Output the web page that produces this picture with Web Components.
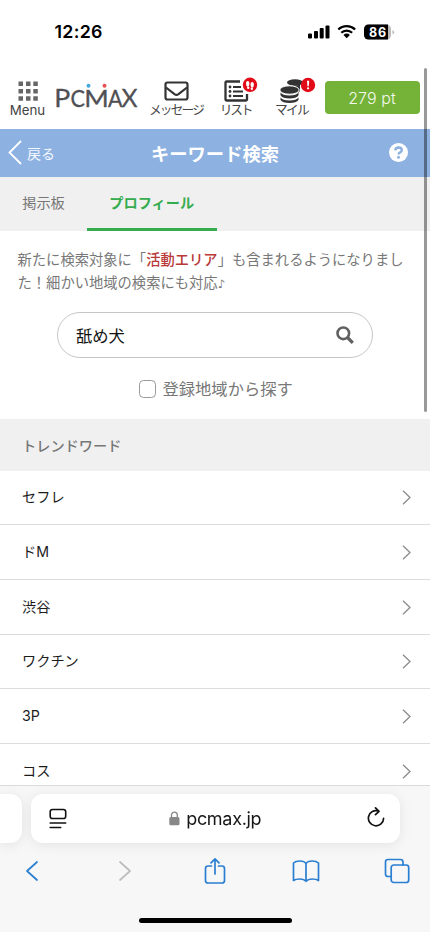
<!DOCTYPE html>
<html lang="ja">
<head>
<meta charset="utf-8">
<meta name="viewport" content="width=device-width">
<title>キーワード検索</title>
<style>
html,body{margin:0;padding:0}
body{width:430px;height:932px;overflow:hidden;background:#fff;font-family:Inter,"Noto Sans CJK JP",sans-serif}
</style>
</head>
<body>
<search-screen></search-screen>
<script>
function define(name, html) {
  const t = document.createElement('template');
  t.innerHTML = html;
  customElements.define(name, class extends HTMLElement {
    constructor() {
      super();
      this.attachShadow({mode: 'open'}).append(t.content.cloneNode(true));
    }
  });
}

define('status-bar', `
<style>
:host{display:flex;height:66px;box-sizing:border-box;padding:21px 37px 0 54.5px;align-items:flex-start;justify-content:space-between;color:#000}
.time{font-size:17.8px;line-height:21px;font-weight:600;letter-spacing:.3px}
.right{display:flex;align-items:center;height:21px;margin:-1px -6px 0 0}
svg{display:block}
</style>
<span class="time">12:26</span>
<div class="right">
<svg width="92" height="20" viewBox="0 0 92 20">
<rect x="1" y="12.500" width="4" height="5" rx="1"/><rect x="7" y="10" width="4" height="7.500" rx="1"/><rect x="12.700" y="7" width="4" height="10.500" rx="1"/><rect x="18.500" y="4.500" width="4" height="13" rx="1"/>
<g transform="translate(0 .7)"><g fill="none" stroke="#000" stroke-width="2.300"><path d="M31.300 7.800a12 12 0 0 1 16.800 0"/><path d="M34.300 11.100a7.700 7.700 0 0 1 10.800 0"/></g>
<path d="M36.500 13.200a4.500 4.500 0 0 1 6.400 0l-3.200 3.300z"/></g>
<rect x="57" y="3.500" width="27" height="15" rx="4.500" fill="#bbb"/><path d="M61.500 3.500H81v15H61.500a4.500 4.500 0 0 1-4.500-4.500V8a4.500 4.500 0 0 1 4.500-4.500z"/>
<path d="M85.500 9v4.500q1.700-.7 1.700-2.250T85.500 9z" fill="#bbb"/>
<text x="62" y="15.600" font-size="12.500" font-weight="700" textLength="17" fill="#fff">86</text>
</svg></div>`);

define('nav-item', `
<style>
:host{display:flex;flex-direction:column;align-items:center;color:#444;flex:none}
.i{height:25px;display:flex;align-items:center}
.l{font-size:var(--fs,13px);line-height:16px;white-space:nowrap;letter-spacing:var(--ls,0);margin-top:-1px}
</style>
<div class="i"><slot name="icon"></slot></div><div class="l"><slot></slot></div>`);

define('site-header', `
<style>
:host{display:grid;grid-template-columns:55px 87px 68px 51px 61px 97px;height:63px;box-sizing:border-box;padding-top:12px;align-items:start}
svg{display:block;overflow:visible}
.pt{height:33px;margin:3px 0 0 2.500px;width:95px;background:#74b238;border-radius:4px;color:#f4f9ee;display:flex;align-items:center;justify-content:center;font-size:16px;font-weight:350;letter-spacing:.1px}
</style>
<nav-item style="--fs:13.300px;--ls:0px"><svg slot="icon" width="20" height="20" viewBox="0 0 20 20" fill="#666"><path d="M.5.500h4.500v4.500H.5zM8 .5h4.500v4.500H8zM15.300.500h4.500v4.500h-4.500zM.5 8h4.500v4.500H.5zM8 8h4.500v4.500H8zM15.300 8h4.500v4.500h-4.500zM.5 15.200h4.500v4.500H.5zM8 15.200h4.500v4.500H8zM15.300 15.200h4.500v4.500h-4.500z"/></svg>Menu</nav-item>
<svg width="87" height="36" viewBox="0 0 87 36">
<g fill="#505054" stroke="#505054" stroke-width=".3" stroke-linejoin="round" font-family="Lato" font-weight="400">
<text x="-.8" y="29" font-size="25.500" textLength="16" lengthAdjust="spacingAndGlyphs">P</text>
<text x="15.500" y="29" font-size="22.500" textLength="14.500" lengthAdjust="spacingAndGlyphs">C</text>
<text x="29.200" y="29" font-size="24" textLength="24.500" lengthAdjust="spacingAndGlyphs">M</text>
<text x="53" y="29" font-size="22.500" textLength="14.500" lengthAdjust="spacingAndGlyphs">A</text>
<text x="66.500" y="29" font-size="24.500" textLength="16" lengthAdjust="spacingAndGlyphs">X</text></g>
<circle cx="33.500" cy="7.700" r="2" fill="#43a8df"/><circle cx="49.500" cy="7.700" r="2" fill="#e84f53"/></svg>
<nav-item style="--fs:12.700px;--ls:-1.800px"><svg slot="icon" width="25" height="20" viewBox="0 0 25 20" fill="none" stroke="#333" stroke-width="2.200" stroke-linejoin="round"><rect x="1.500" y="1.500" width="22" height="17" rx="2"/><path d="M2 6.500l8.500 6.700q2 1.500 4 0L23 6.500"/></svg>メッセージ</nav-item>
<nav-item style="--fs:12.700px;--ls:-2.200px"><svg slot="icon" width="24" height="22" viewBox="0 0 24 22"><g fill="none" stroke="#333" stroke-width="2.300"><path d="M16 1.500H2.500Q1.500 1.500 1.500 2.500v17q0 1 1 1H22q1 0 1-1V14"/><path d="M9 7h8M9 11.500h10M9 16h10" stroke-width="2"/></g><g fill="#333"><circle cx="6" cy="7" r="1.400"/><circle cx="6" cy="11.500" r="1.400"/><circle cx="6" cy="16" r="1.400"/></g><circle cx="26" cy="4.800" r="7.200" fill="#e20c18"/><g fill="#fff"><ellipse cx="23.700" cy="3.800" rx="1.700" ry="2.900"/><circle cx="24.200" cy="7.700" r="1.200"/><ellipse cx="28.200" cy="4.800" rx="1.700" ry="2.900"/><circle cx="27.800" cy="8.800" r="1.200"/></g></svg>リスト</nav-item>
<nav-item style="--fs:12.700px;--ls:-1.700px"><svg slot="icon" width="24" height="24" viewBox="0 0 24 24" fill="#333"><ellipse cx="15" cy="3.500" rx="8" ry="3.300"/><path d="M13 6.500q5 .5 7-1.500v7l-2 2V9z"/><ellipse cx="9.500" cy="11" rx="9.700" ry="4.200" stroke="#fff" stroke-width="1"/><path d="M.5 13.500q2 3 9 3t9-3v2.700q-2 3.300-9 3.300t-9-3.300zM.5 18.500q2 3 9 3t9-3V21q-2 3-9 3t-9-3z"/><circle cx="28" cy="6" r="7.200" fill="#e20c18"/><path d="M27 1.700h2.200l-.4 5.500h-1.400z" fill="#fff"/><circle cx="28.100" cy="9.300" r="1.100" fill="#fff"/></svg>マイル</nav-item>
<div class="pt">279 pt</div>`);

define('title-bar', `
<style>
:host{display:grid;grid-template-columns:1fr auto 1fr;align-items:center;height:47.500px;background:#8db1e1;color:#fff;box-sizing:border-box;padding:0 8px}
.b{display:flex;align-items:center;gap:5px;font-size:14px;color:#f4f8ff}
b{font-size:18.300px;font-weight:600}
.q{justify-self:end;margin-right:14.500px}
svg{display:block}
</style>
<div class="b"><svg width="14" height="25" viewBox="0 0 14 25"><path d="M13 1L1.500 12.500 13 24" fill="none" stroke="#fff" stroke-width="1.800"/></svg><span>戻る</span></div>
<b>キーワード検索</b>
<svg class="q" width="19" height="19" viewBox="0 0 19 19"><circle cx="9.500" cy="9.500" r="9.500" fill="#fff"/><path d="M6.200 7.300Q6.500 4.500 9.600 4.500q3.200.1 3.200 2.600 0 1.500-1.600 2.300-1.600.8-1.600 2" fill="none" stroke="#8db1e1" stroke-width="2.400"/><circle cx="9.500" cy="14.200" r="1.500" fill="#8db1e1"/></svg>`);

define('tab-bar', `
<style>
:host{display:flex;height:54.500px;background:#f0f0f0;font-size:14.200px;color:#777}
div{box-sizing:border-box;display:flex;align-items:center;justify-content:center;padding-bottom:3px}
.a{width:87px}.p{width:129.500px;color:#35ac4d;font-weight:600;border-bottom:3px solid #35ac4d;padding:0}
</style><div class="a">掲示板</div><div class="p">プロフィール</div>`);

define('search-form', `
<style>
:host{display:block;height:188px;box-sizing:border-box;padding:17px 0 0;color:#777}
p{margin:0 0 0 17.500px;font-size:14.300px;line-height:23px;white-space:nowrap}
em{font-style:normal;color:#b93838;font-weight:500}
.n{font-family:"DejaVu Sans";font-size:11.500px;line-height:1}
.box{margin:18px 0 0 57px;width:316px;height:46px;box-sizing:border-box;border:1px solid #c6c6c6;border-radius:23px;padding:0 18px;display:flex;align-items:center;justify-content:space-between;color:#111;font-size:16.300px}
.c{display:flex;align-items:center;gap:6.500px;margin:19px 0 0 138.500px;font-size:16.300px;line-height:24px}
i{width:17.500px;height:17.500px;box-sizing:border-box;border:1.700px solid #999;border-radius:4.500px}
</style>
<p>新たに検索対象に「<em>活動エリア</em>」も含まれるようになりまし<br>た！細かい地域の検索にも対応<span class="n">♪</span></p>
<div class="box"><span>舐め犬</span><svg width="18" height="18" viewBox="0 0 18 18" fill="none" stroke="#606060"><circle cx="7.300" cy="7.300" r="5.800" stroke-width="2.600"/><path d="M11.500 11.500l5.300 5.300" stroke-width="3.200"/></svg></div>
<div class="c"><i></i><span>登録地域から探す</span></div>`);

define('section-title', `
<style>:host{display:flex;align-items:center;height:51.500px;background:#f0f0f0;color:#777;font-weight:500;font-size:14.200px;padding-left:22px;box-sizing:border-box}</style><slot></slot>`);

define('trend-row', `
<style>:host{display:flex;align-items:center;justify-content:space-between;height:54.700px;flex:none;box-sizing:border-box;border-bottom:1px solid #dcdcdc;padding:0 19px 0 22px;color:#1c1c1c;font-size:14.200px}span{padding-bottom:2px}svg{margin-top:1px}</style>
<span><slot></slot></span><svg width="9" height="15" viewBox="0 0 9 15" fill="none" stroke="#8c8c8c" stroke-width="1.300"><path d="M1 .8l7 6.700-7 6.700"/></svg>`);

define('browser-bar', `
<style>
:host{display:flex;flex-direction:column;height:147px;background:#f7f7f7;border-top:1px solid #dadada;box-sizing:border-box;position:relative}
.top{display:flex;gap:9px;padding-top:8px;height:49px;filter:drop-shadow(0 2px 6px rgba(0,0,0,.08))}
.prev{width:22px;background:#fff;border-radius:0 12px 12px 0}
.url{width:368.500px;background:#fff;border-radius:12px;display:grid;grid-template-columns:1fr auto 1fr;align-items:center;padding:0 15px 0 18px;box-sizing:border-box;color:#161616;font-size:18px}
.m{display:flex;gap:6px;align-items:center;letter-spacing:-.3px;margin-right:3px}
svg{display:block}
.tools{display:grid;grid-template-columns:78px 94px 86px 96px 76px;justify-items:center;align-items:center;height:30px;margin-top:13px;padding:0}
.tools svg:nth-child(1){margin-right:15px}
.tools svg:nth-child(5){margin-left:10px}
.home{width:153px;height:5px;border-radius:3px;background:#000;margin:32px auto 0}
.tools svg{fill:none;stroke:#2b7fd2;stroke-width:1.700;stroke-linejoin:round;stroke-linecap:round}
</style>
<div class="top"><div class="prev"></div><div class="url">
<svg width="18" height="21" viewBox="0 0 18 21" fill="none" stroke="#111" stroke-width="1.600" stroke-linecap="round"><rect x="1.200" y="1.500" width="15.500" height="9" rx="2.300"/><path d="M1.200 15h15.500M1.200 19.500h10.500"/></svg>
<div class="m"><svg width="11" height="15" viewBox="0 0 11 15"><rect x=".3" y="6" width="10.200" height="8.300" rx="1.500" fill="#888"/><path d="M2.500 6.500V4a2.900 2.900 0 0 1 5.800 0v2.500" fill="none" stroke="#888" stroke-width="1.300"/></svg><span>pcmax.jp</span></div>
<svg style="justify-self:end;margin-top:-3px" width="18" height="22" viewBox="0 0 18 22" fill="none" stroke="#111" stroke-width="1.700" stroke-linecap="round" stroke-linejoin="round"><path d="M16.600 12.300A7.600 7.600 0 1 1 11.500 5M8.500 1.800L12 5.300 8.500 8.700"/></svg>
</div></div>
<div class="tools">
<svg width="14" height="22" viewBox="0 0 14 22"><path d="M12 2L2 11l10 9"/></svg>
<svg style="stroke:#bdbdbd" width="14" height="22" viewBox="0 0 14 22"><path d="M2 2l10 9-10 9"/></svg>
<svg width="22" height="28" viewBox="0 0 22 28"><path d="M7.500 9H4Q1.500 9 1.500 11.500v12Q1.500 26 4 26h14q2.500 0 2.500-2.500v-12Q20.500 9 18 9h-3.500M11 17V2M7 5.800L11 1.800l4 4"/></svg>
<svg width="28" height="24" viewBox="0 0 28 24"><path d="M14 4.500Q12.500 2 7.800 2 3.500 2 1.500 4v17.500q2-1.500 6.300-1.500 4.200 0 6.200 2.300 2-2.300 6.200-2.300 4.300 0 6.300 1.500V4Q24.500 2 20.200 2 15.500 2 14 4.500zM14 4.500v17.500"/></svg>
<svg width="26" height="26" viewBox="0 0 26 26"><path d="M7 18.500H4Q1.500 18.500 1.500 16V4Q1.500 1.500 4 1.500h12.500Q19 1.500 19 4v3"/><rect x="7.200" y="7" width="17.500" height="17.500" rx="2.500"/></svg>
</div><div class="home"></div>`);

define('search-screen', `
<style>
:host{display:flex;flex-direction:column;width:430px;height:932px;overflow:hidden;position:relative;background:#fff}
.list{display:flex;flex-direction:column;height:314.500px;overflow:hidden;flex:none}
.scroll{position:absolute;left:423.500px;top:68px;width:3px;height:344px;border-radius:2px;background:rgba(0,0,0,.4)}
status-bar,site-header,title-bar,tab-bar,search-form,section-title,browser-bar{flex:none}
</style>
<status-bar></status-bar><site-header></site-header><title-bar></title-bar><tab-bar></tab-bar>
<search-form></search-form><section-title>トレンドワード</section-title>
<div class="list"><trend-row>セフレ</trend-row><trend-row>ドM</trend-row><trend-row>渋谷</trend-row><trend-row>ワクチン</trend-row><trend-row>3P</trend-row><trend-row>コス</trend-row></div>
<browser-bar></browser-bar><div class="scroll"></div>`);
</script>
</body>
</html>
